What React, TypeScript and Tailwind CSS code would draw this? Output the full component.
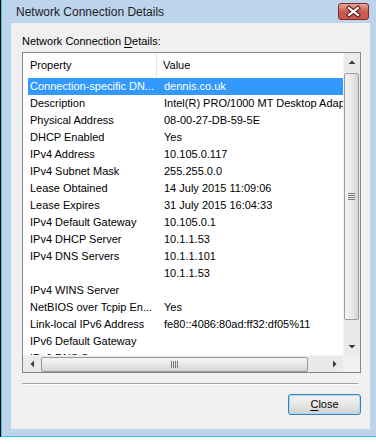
import React from "react";

const rows: [string, string][] = [
  ["Connection-specific DN...", "dennis.co.uk"],
  ["Description", "Intel(R) PRO/1000 MT Desktop Adapter"],
  ["Physical Address", "08-00-27-DB-59-5E"],
  ["DHCP Enabled", "Yes"],
  ["IPv4 Address", "10.105.0.117"],
  ["IPv4 Subnet Mask", "255.255.0.0"],
  ["Lease Obtained", "14 July 2015 11:09:06"],
  ["Lease Expires", "31 July 2015 16:04:33"],
  ["IPv4 Default Gateway", "10.105.0.1"],
  ["IPv4 DHCP Server", "10.1.1.53"],
  ["IPv4 DNS Servers", "10.1.1.101"],
  ["", "10.1.1.53"],
  ["IPv4 WINS Server", ""],
  ["NetBIOS over Tcpip En...", "Yes"],
  ["Link-local IPv6 Address", "fe80::4086:80ad:ff32:df05%11"],
  ["IPv6 Default Gateway", ""],
  ["IPv6 DNS Servers", ""],
];

function Arrow({ dir }: { dir: "up" | "down" | "left" | "right" }) {
  const pts: Record<string, string> = {
    up: "1.5,5 8.5,5 5,1.5",
    down: "1.5,1 8.5,1 5,4.5",
    left: "5,1.5 5,8.5 1.5,5",
    right: "1,1.5 1,8.5 4.5,5",
  };
  const w = dir === "up" || dir === "down" ? 10 : 6;
  const h = dir === "up" || dir === "down" ? 6 : 10;
  return (
    <svg width={w} height={h} viewBox={`0 0 ${w} ${h}`}>
      <polygon points={pts[dir]} fill="#3c3c3c" />
    </svg>
  );
}

export default function App() {
  return (
    <div className="w-[376px] h-[444px] bg-white overflow-hidden font-['Liberation_Sans',Arial,sans-serif] text-black">
      <div className="h-[437px] border-l border-black">
        <div className="h-full flex flex-col border-l border-b border-[#2ec4e4] bg-[#bcd4ec] pl-[9px] pr-[6px] pb-[7px]">
          {/* Title bar */}
          <div className="h-[23px] flex items-center shrink-0">
            <div className="ml-[5px] pt-[2px] text-[12px] leading-[15px] text-[#1e1e1e]">
              Network Connection Details
            </div>
            <div className="ml-auto mr-[1px] w-[31px] h-[17px] rounded-[3px] border border-[#7a2b24] bg-gradient-to-b from-[#e6a59a] via-[#cc5d50] to-[#c9574b] flex items-center justify-center">
              <svg width="29" height="15" viewBox="0 0 29 15">
                <path d="M10 4 L19 11 M19 4 L10 11" stroke="#5b1d18" strokeWidth="4.2" strokeLinecap="square" />
                <path d="M10 4 L19 11 M19 4 L10 11" stroke="#ffffff" strokeWidth="2.2" strokeLinecap="square" />
              </svg>
            </div>
          </div>

          {/* Content */}
          <div className="flex-1 bg-[#f0f0f0] pl-[11px] pr-[9px] pt-[12px] flex flex-col text-[11px] leading-[13px]">
            <div className="h-[13px]">
              Network Connection <span className="underline underline-offset-[2px]">D</span>etails:
            </div>

            <div className="mt-[4px] h-[321px] border border-[#828790] bg-white flex flex-col">
              <div className="flex h-[302px]">
                <div className="w-[320px] overflow-hidden">
                  {/* header */}
                  <div className="h-[25px] flex items-center">
                    <div className="w-[134px] h-full flex items-center pl-[7px] border-r border-[#e5e5e5]">
                      Property
                    </div>
                    <div className="flex-1 pl-[6px]">Value</div>
                  </div>
                  <div className="pl-[5px]">
                    {rows.map(([k, v], i) => (
                      <div
                        key={i}
                        className={
                          i === 0
                            ? "h-[17px] flex items-center whitespace-nowrap bg-[#3399ff] text-white"
                            : "h-[17px] flex items-center whitespace-nowrap"
                        }
                      >
                        <div className="w-[129px] pl-[2px] overflow-hidden shrink-0">{k}</div>
                        <div className="pl-[7px] overflow-hidden">{v}</div>
                      </div>
                    ))}
                  </div>
                </div>
                {/* vertical scrollbar */}
                <div className="w-[17px] flex flex-col bg-[#eaeaea] border-l border-[#f4f4f4]">
                  <div className="h-[17px] flex items-center justify-center">
                    <Arrow dir="up" />
                  </div>
                  <div className="flex-1 pt-[3px]">
                    <div className="ml-[0px] w-[15px] h-[247px] rounded-[2px] border border-[#9a9a9a] bg-gradient-to-r from-[#f4f4f4] via-[#e9e9e9] to-[#d4d4d4] flex flex-col items-center justify-center gap-[1px]">
                      <div className="w-[7px] h-[1px] bg-[#7a7a7a]" />
                      <div className="w-[7px] h-[1px] bg-[#7a7a7a]" />
                      <div className="w-[7px] h-[1px] bg-[#7a7a7a]" />
                      <div className="w-[7px] h-[1px] bg-[#7a7a7a]" />
                    </div>
                  </div>
                  <div className="h-[17px] flex items-center justify-center">
                    <Arrow dir="down" />
                  </div>
                </div>
              </div>
              <div className="flex h-[17px]">
                {/* horizontal scrollbar */}
                <div className="w-[320px] flex bg-[#eaeaea] border-t border-[#f4f4f4]">
                  <div className="w-[17px] flex items-center justify-center">
                    <Arrow dir="left" />
                  </div>
                  <div className="flex-1 pl-[1px] flex items-center">
                    <div className="w-[267px] h-[15px] rounded-[2px] border border-[#9a9a9a] bg-gradient-to-b from-[#f4f4f4] via-[#e9e9e9] to-[#d4d4d4] flex items-center justify-center gap-[1px]">
                      <div className="w-[1px] h-[7px] bg-[#7a7a7a]" />
                      <div className="w-[1px] h-[7px] bg-[#7a7a7a]" />
                      <div className="w-[1px] h-[7px] bg-[#7a7a7a]" />
                      <div className="w-[1px] h-[7px] bg-[#7a7a7a]" />
                    </div>
                  </div>
                  <div className="w-[17px] flex items-center justify-center">
                    <Arrow dir="right" />
                  </div>
                </div>
                <div className="w-[17px] bg-[#f0f0f0]" />
              </div>
            </div>

            <div className="mt-[10px] mr-[3px] h-[1px] bg-[#a0a0a0]" />
            <div className="mr-[3px] h-[1px] bg-white" />

            <div className="mt-[9px] flex justify-end">
              <div className="w-[73px] h-[21px] rounded-[3px] border border-[#3c7fb1] bg-gradient-to-b from-[#f2f2f2] via-[#e8e8e8] to-[#cfcfcf] shadow-[inset_0_0_0_1px_#a6dcf4] flex items-center justify-center">
                <span>
                  <span className="underline underline-offset-[2px]">C</span>lose
                </span>
              </div>
            </div>
          </div>
        </div>
      </div>
    </div>
  );
}
